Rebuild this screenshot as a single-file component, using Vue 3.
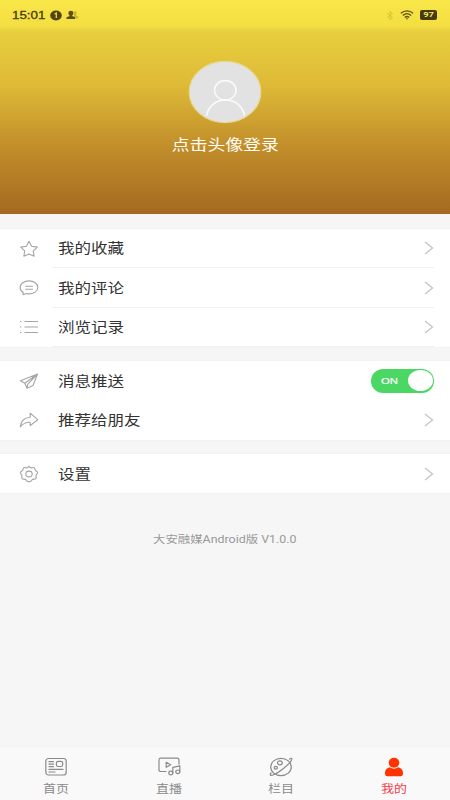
<script setup>
const groups = [
  [
    { label: '我的收藏', icon: 'star' },
    { label: '我的评论', icon: 'comment' },
    { label: '浏览记录', icon: 'list' },
  ],
  [
    { label: '消息推送', icon: 'send', toggle: true },
    { label: '推荐给朋友', icon: 'share' },
  ],
  [{ label: '设置', icon: 'gear' }],
]
const tabs = [
  { label: '首页', icon: 'news' },
  { label: '直播', icon: 'live' },
  { label: '栏目', icon: 'planet' },
  { label: '我的', icon: 'me', active: true },
]
</script>

<template>
  <div class="screen">
    <header class="hero">
      <div class="status">
        <span class="time"><span class="wide">15:01</span></span>
        <svg class="badge" width="12" height="11" viewBox="0 0 12 11">
          <ellipse cx="6" cy="5.5" rx="5.8" ry="5" fill="#50450c" />
          <path d="M4.5 4 6.3 3v5" fill="none" stroke="#eadb45" stroke-width="1.3" />
        </svg>
        <svg class="people" width="13" height="10" viewBox="0 0 13 10">
          <path d="M8 1.5c2-1 3.4.3 2.6 2.2l-.6 1.6 2.2 1.2V8.6H8z" fill="#c9b835" />
          <path d="M2.4 3C2.4 0 7.4 0 7.4 3c0 1.2-.6 2-1.2 2.5V6L9 7.2V9H.5V7.2L3.6 6v-.5C2.9 5 2.4 4.2 2.4 3z" fill="#5c500f" />
        </svg>
        <span class="space"></span>
        <svg class="bt" width="8" height="11" viewBox="0 0 8 11">
          <path d="M1 3l5.5 4.5L4 9.8V1.2l2.5 2.3L1 8" fill="none" stroke="#d6c434" stroke-width="1" />
        </svg>
        <svg class="wifi" width="14" height="10" viewBox="0 0 14 10">
          <g fill="none" stroke="#5d5213" stroke-width="1.3">
            <path d="M.8 3.2Q7-1.5 13.2 3.2" />
            <path d="M2.8 5.4Q7 2 11.2 5.4" />
            <path d="M4.8 7.4Q7 5.6 9.2 7.4" />
          </g>
          <path d="M5.8 8.3h2.4L7 9.7z" fill="#5d5213" />
        </svg>
        <span class="battery"><span class="wide">97</span></span>
      </div>
      <svg class="avatar" width="74" height="64" viewBox="0 0 74 64">
        <ellipse cx="37" cy="32" rx="35.8" ry="30.6" fill="#e2e2e2" stroke="#e6d88d" stroke-width="1.2" />
        <g fill="none" stroke="#fbfbfb" stroke-width="1.5">
          <ellipse cx="37.3" cy="30.3" rx="10.8" ry="9.8" />
          <path d="M18.500 56C20.500 45.500 28 40.100 37.500 40.100S54.500 45.500 56.500 55.500" />
        </g>
      </svg>
      <div class="login"><span class="wide">点击头像登录</span></div>
    </header>

    <main>
      <section v-for="(g, i) in groups" :key="i" class="group">
        <div v-for="r in g" :key="r.label" class="row">
          <svg class="icon" width="20" height="18" viewBox="0 0 20 18">
            <path v-if="r.icon === 'star'" d="M10 1.200 12.600 6.300 18.300 7.100 14.300 10.800 15.100 16.200 10 13.900 4.900 16.200 5.700 10.800 1.700 7.100 7.400 6.300Z" />
            <template v-else-if="r.icon === 'comment'">
              <path d="M4 15.800 4.300 13.500C2.300 12.300 1.200 10.600 1.200 8.400 1.200 4.700 5 1.900 10 1.900s8.800 2.700 8.800 6.500-3.900 6.500-8.800 6.500c-.9 0-1.700-.1-2.500-.3z" />
              <path d="M6.200 7.300h7.700M6.200 10.200h7.700" />
            </template>
            <path v-else-if="r.icon === 'list'" d="M5.500 3.500h13.500M5.500 9h13.500M5.500 14.500h13.500M1 3.500h1.300M1 9h1.300M1 14.500h1.300" />
            <path v-else-if="r.icon === 'send'" d="M18.500 2 1.500 8.800 5.800 11.200 8 16.200 14 13.500ZM5.800 11.200 18.500 2 8.800 12.200 8 16.200" />
            <path v-else-if="r.icon === 'share'" d="M11.200 2.200 18.700 8.700 11.200 14.600V11.300C6.500 11.100 4 12.500 1.300 15.900 1.800 10.200 5 6.700 11.200 6.200Z" />
            <template v-else>
              <path d="M10 1.200Q11.300 3.300 13.400 2.700 15.800 2 15.900 4 15.900 5.700 17.500 6.300 19.500 7.300 18 9 16.500 10.500 17.200 12 17.500 14 15.400 14.100 13.500 14 12.700 15.300 11.500 17.300 10 16.500 8.500 17.300 7.300 15.300 6.500 14 4.600 14.100 2.500 14 2.800 12 3.500 10.500 2 9 .5 7.300 2.500 6.300 4.100 5.700 4.100 4 4.200 2 6.600 2.700 8.700 3.300 10 1.200Z" />
              <ellipse cx="10" cy="9" rx="3.200" ry="2.900" />
            </template>
          </svg>
          <div class="body">
            <span class="label wide">{{ r.label }}</span>
            <span v-if="r.toggle" class="toggle"><span class="on wide">ON</span><span class="knob"></span></span>
            <svg v-else class="arrow" width="10" height="14" viewBox="0 0 10 14">
              <path d="M1 1 8.500 7 1 13" />
            </svg>
          </div>
        </div>
      </section>
      <p class="version"><span class="wide">大安融媒Android版 V1.0.0</span></p>
    </main>

    <nav class="tabs">
      <div v-for="t in tabs" :key="t.label" class="tab" :class="{ active: t.active }">
        <svg width="24" height="20" viewBox="0 0 24 20">
          <template v-if="t.icon === 'news'">
            <rect x="1.800" y="1.500" width="20.400" height="16.500" rx="2.800" />
            <rect x="12.400" y="4.300" width="6.300" height="5.200" rx="1.800" />
            <path d="M5 4.700h4.500M5 7.200h4.500M5 9.700h4.500M5 12.300h14M5 15h6" />
          </template>
          <template v-else-if="t.icon === 'live'">
            <path d="M9 14.500H3.800Q2 14.500 2 13V2.800Q2 1.200 3.800 1.200h16.400Q22 1.200 22 2.800V7M9.200 5.300v5L13.700 7.800Z" />
            <path d="M15.800 15.800V10.300L22.800 8.800V14.600" />
            <ellipse cx="13.800" cy="16" rx="2" ry="1.800" />
            <ellipse cx="20.800" cy="14.800" rx="2" ry="1.800" />
          </template>
          <template v-else-if="t.icon === 'planet'">
            <ellipse cx="12" cy="10" rx="10.300" ry="8.700" />
            <ellipse cx="10.900" cy="5.800" rx="2.400" ry="2" />
            <ellipse cx="6.800" cy="10.700" rx="1.600" ry="1.400" />
            <path d="M20.500 2.200C22 .5 23.600 1.300 22.500 3.300 19.500 8.200 9.500 15.800 4 18 1.200 19.100.6 17.700 2 16" />
          </template>
          <g v-else class="solid">
            <ellipse cx="12" cy="5.700" rx="5.300" ry="5" />
            <path d="M7.800 10.300Q12 13 16.200 10.300C20 11.200 21.200 14 21 17Q20.900 19.200 18.500 19.200H5.500Q3.100 19.200 3 17C2.800 14 4 11.200 7.800 10.300Z" />
          </g>
        </svg>
        <span class="tab-label wide">{{ t.label }}</span>
      </div>
    </nav>
  </div>
</template>

<style>
body {
  margin: 0;
}
</style>

<style scoped>
.screen {
  width: 450px;
  height: 800px;
  display: flex;
  flex-direction: column;
  background: #f6f6f6;
  font-family: Roboto, "Noto Sans CJK SC", sans-serif;
  overflow: hidden;
}
.wide {
  display: inline-block;
  white-space: nowrap;
  transform: scaleX(1.18);
}
.hero {
  height: 214px;
  flex: none;
  display: flex;
  flex-direction: column;
  align-items: center;
  background: linear-gradient(#f9e648 0, #f4df43 26px, #e8cf3e 31px, #deba37 85px, #c28f2b 145px, #a46920 214px);
}
.status {
  width: 100%;
  height: 30px;
  box-sizing: border-box;
  padding: 0 13px 0 12px;
  display: flex;
  align-items: center;
}
.time {
  width: 38px;
  font-family: "Liberation Sans", sans-serif;
  font-size: 11.6px;
  -webkit-text-stroke: 0.3px #453b0b;
  line-height: 30px;
  color: #453b0b;
}
.time .wide {
  transform-origin: left;
  transform: scaleX(1.15);
}
.people {
  margin-left: 4px;
}
.space {
  flex: 1;
}
.bt {
  margin-right: -1px;
}
.wifi {
  margin: 0 6px 0 7px;
}
.battery {
  width: 17px;
  height: 10px;
  border-radius: 2px;
  background: #453b0b;
  color: #f3e562;
  font-size: 8px;
  font-weight: 700;
  line-height: 10px;
  text-align: center;
}
.avatar {
  margin-top: 29.5px;
}
.login {
  margin-top: 10.5px;
  height: 22px;
  line-height: 22px;
  font-size: 15.1px;
  color: #fffdf5;
}
main {
  flex: 1;
}
.group {
  margin-top: 14px;
  background: #fff;
  box-shadow: 0 0 0 0.5px #efefef;
}
.group:first-child {
  margin-top: 15px;
}
.row {
  height: 39.4px;
  display: flex;
  align-items: center;
  padding-left: 19px;
}
.icon {
  flex: none;
  fill: none;
  stroke: #a5a5a5;
  stroke-width: 1.1;
  stroke-linejoin: round;
}
.body {
  flex: 1;
  height: 100%;
  box-sizing: border-box;
  margin: 0 16px 0 13px;
  padding-left: 6px;
  display: flex;
  align-items: center;
  justify-content: space-between;
}
.group:first-child .body {
  border-bottom: 1px solid #f0f0f0;
}
.label {
  transform-origin: left;
  font-size: 14px;
  line-height: 20px;
  color: #333;
}
.arrow {
  fill: none;
  stroke: #c5c5c5;
  stroke-width: 1.3;
}
.toggle {
  width: 63px;
  height: 24px;
  box-sizing: border-box;
  padding: 1px 1px 1px 10px;
  border-radius: 12px;
  display: flex;
  align-items: center;
  justify-content: space-between;
  background: #4bd763;
}
.on {
  transform-origin: left;
  color: #fff;
  font-family: "Liberation Sans", sans-serif;
  font-size: 9.6px;
  -webkit-text-stroke: 0.2px #fff;
}
.knob {
  width: 25px;
  height: 21px;
  border-radius: 50%;
  background: #fff;
}
.version {
  margin: 36.5px 0 0;
  text-align: center;
  font-size: 10.5px;
  line-height: 20px;
  color: #999;
}
.tabs {
  height: 54px;
  box-sizing: border-box;
  border-top: 1px solid #f2f2f2;
  background: #f9f9f9;
  display: flex;
}
.tab {
  flex: 1;
  display: flex;
  flex-direction: column;
  align-items: center;
  padding-top: 10px;
  color: #8a8a8a;
}
.tab svg {
  flex: none;
  fill: none;
  stroke: currentColor;
  stroke-width: 1.2;
  stroke-linecap: round;
  stroke-linejoin: round;
}
.tab .solid {
  fill: #ff3300;
  stroke: none;
}
.tab-label {
  margin-top: 5px;
  font-size: 11px;
  line-height: 16px;
}
.active {
  color: #f43e4c;
}
</style>
